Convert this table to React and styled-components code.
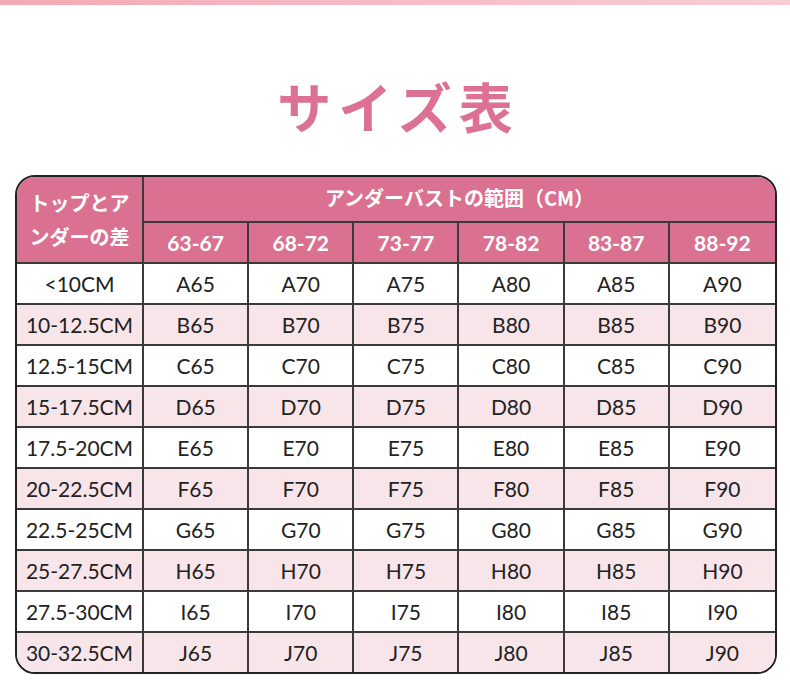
import React from "react";
import styled, { createGlobalStyle } from "styled-components";

const GlobalStyle = createGlobalStyle`
  html, body {
    margin: 0;
    padding: 0;
    background: #ffffff;
  }
  body {
    font-family: "Lato", "Noto Sans CJK JP", sans-serif;
  }
`;

const Page = styled.div`
  width: 790px;
  height: 681px;
  overflow: hidden;
  background: #ffffff;
`;

const TopStrip = styled.div`
  height: 5px;
  background: linear-gradient(90deg, #f3aab4 0%, #f6bcc4 50%, #f8cdd3 100%);
`;

const Title = styled.h1`
  margin: 0;
  padding-top: 71px;
  height: 99px;
  box-sizing: content-box;
  text-align: center;
  font-family: "Noto Sans CJK JP", sans-serif;
  font-weight: 700;
  font-size: 54px;
  line-height: 60px;
  letter-spacing: 7px;
  padding-left: 7px;
  color: #dc7193;
`;

const Frame = styled.div`
  margin-left: 15px;
  width: 762px;
  border: 2.5px solid #222;
  border-radius: 20px;
  overflow: hidden;
  box-sizing: border-box;
`;

const Table = styled.table`
  width: 100%;
  border-collapse: separate;
  border-spacing: 0;
  table-layout: fixed;
`;

const HeadCell = styled.th`
  background: #db7190;
  color: #ffffff;
  font-weight: 700;
  padding: 0;
  text-align: center;
  vertical-align: middle;
  border-right: 2px solid #3a3a3a;
  border-bottom: 2px solid #3a3a3a;
  font-family: ${({ $jp }) =>
    $jp ? '"Noto Sans CJK JP", sans-serif' : '"Lato", "Noto Sans CJK JP", sans-serif'};
  font-size: ${({ $jp }) => ($jp ? "20px" : "21px")};
  height: ${({ $h }) => $h}px;
  line-height: ${({ $jp }) => ($jp ? "34px" : "normal")};
  &:last-child {
    border-right: none;
  }
`;

const Cell = styled.td`
  height: 39px;
  padding: 0;
  text-align: center;
  font-size: 21px;
  color: #222;
  background: ${({ $alt }) => ($alt ? "#f8e5ea" : "#ffffff")};
  border-right: 2px solid #3a3a3a;
  border-bottom: 2px solid #3a3a3a;
  &:last-child {
    border-right: none;
  }
`;

const Row = styled.tr`
  &:last-child td {
    border-bottom: none;
  }
`;

const HeadText = styled.span`
  display: block;
  margin-top: -3px;
`;

const ranges = ["63-67", "68-72", "73-77", "78-82", "83-87", "88-92"];
const sizes = ["65", "70", "75", "80", "85", "90"];
const diffs = [
  ["<10CM", "A"],
  ["10-12.5CM", "B"],
  ["12.5-15CM", "C"],
  ["15-17.5CM", "D"],
  ["17.5-20CM", "E"],
  ["20-22.5CM", "F"],
  ["22.5-25CM", "G"],
  ["25-27.5CM", "H"],
  ["27.5-30CM", "I"],
  ["30-32.5CM", "J"],
];

export default function App() {
  return (
    <Page>
      <GlobalStyle />
      <TopStrip />
      <Title>サイズ表</Title>
      <Frame>
        <Table>
          <colgroup>
            <col style={{ width: "127px" }} />
            {ranges.map((r) => (
              <col key={r} />
            ))}
          </colgroup>
          <thead>
            <tr>
              <HeadCell rowSpan={2} $jp $h={85}>
                トップとア
                <br />
                ンダーの差
              </HeadCell>
              <HeadCell colSpan={6} $jp $h={44}>
                <HeadText>アンダーバストの範囲（CM）</HeadText>
              </HeadCell>
            </tr>
            <tr>
              {ranges.map((r) => (
                <HeadCell key={r} $h={39}>
                  {r}
                </HeadCell>
              ))}
            </tr>
          </thead>
          <tbody>
            {diffs.map(([label, letter], i) => (
              <Row key={label}>
                <Cell $alt={i % 2 === 1}>{label}</Cell>
                {sizes.map((s) => (
                  <Cell key={s} $alt={i % 2 === 1}>
                    {letter + s}
                  </Cell>
                ))}
              </Row>
            ))}
          </tbody>
        </Table>
      </Frame>
    </Page>
  );
}
